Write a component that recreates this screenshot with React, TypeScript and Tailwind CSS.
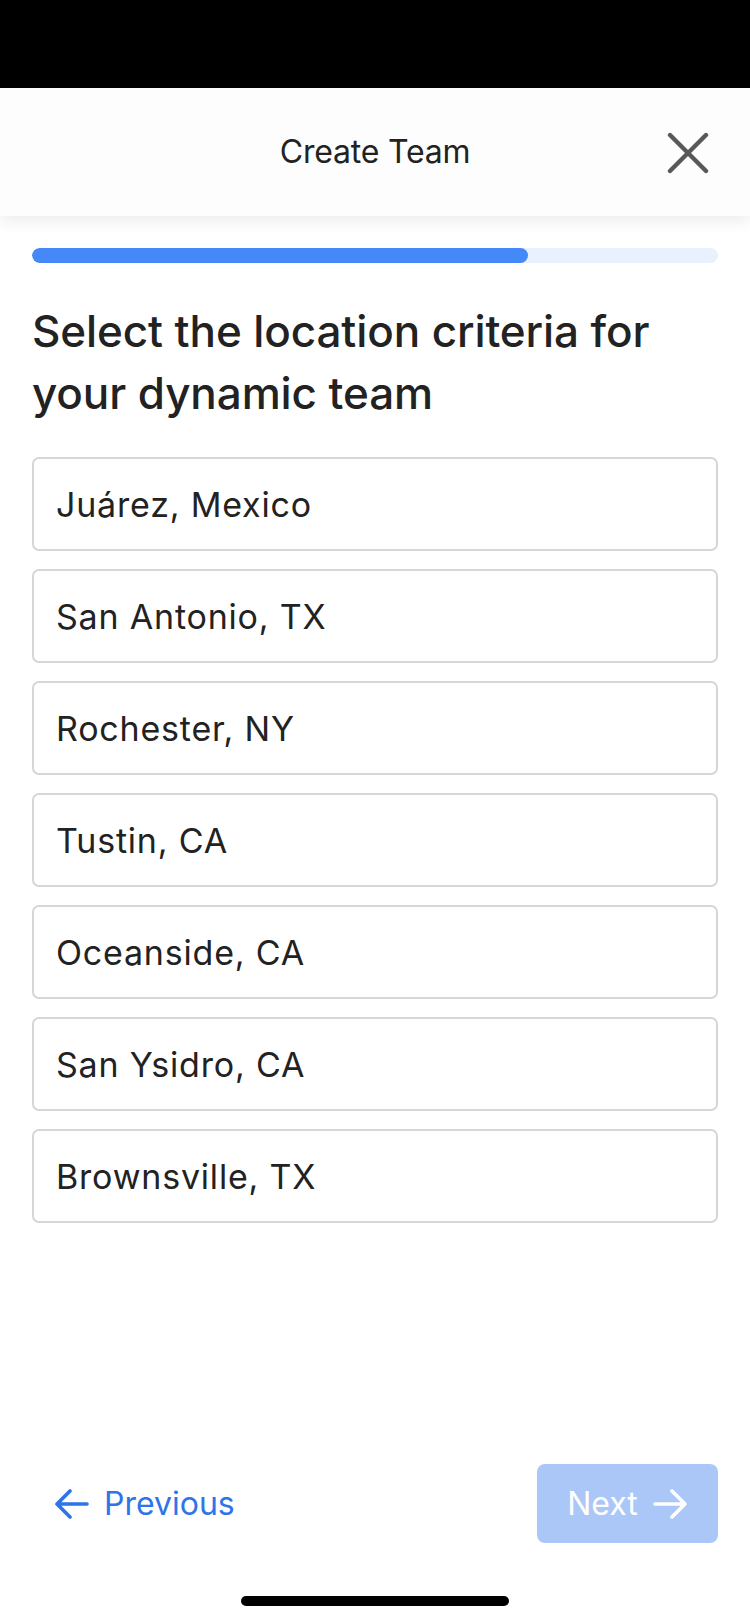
import { useState } from "react";

const locations = [
  "Juárez, Mexico",
  "San Antonio, TX",
  "Rochester, NY",
  "Tustin, CA",
  "Oceanside, CA",
  "San Ysidro, CA",
  "Brownsville, TX",
];

function ArrowIcon({ dir, className }: { dir: "left" | "right"; className?: string }) {
  const d = dir === "left" ? "M16 2 L3 15 L16 28 M3 15 H33" : "M20 2 L33 15 L20 28 M33 15 H3";
  return (
    <svg width="36" height="30" viewBox="0 0 36 30" fill="none" className={className}>
      <path d={d} stroke="currentColor" strokeWidth="3.6" strokeLinecap="round" strokeLinejoin="round" />
    </svg>
  );
}

export default function App() {
  const [selected, setSelected] = useState<string | null>(null);

  return (
    <div
      className="flex h-[1624px] w-[750px] flex-col overflow-hidden bg-white text-[#222222]"
      style={{ fontFamily: "Inter, 'Noto Sans', sans-serif" }}
    >
      <div className="h-[88px] shrink-0 bg-black" />

      <header className="relative z-10 flex h-[128px] shrink-0 items-center justify-center bg-[#fdfdfd] shadow-[0_6px_14px_rgba(0,0,0,0.07)]">
        <h1 className="text-[32px] font-normal tracking-[-0.2px] text-[#222222]">Create Team</h1>
        <button className="absolute right-[40px] top-[44px] text-[#58585a]" aria-label="Close">
          <svg width="44" height="42" viewBox="0 0 44 42" fill="none">
            <path d="M4 3 L40 39 M40 3 L4 39" stroke="currentColor" strokeWidth="4.4" strokeLinecap="round" />
          </svg>
        </button>
      </header>

      <main className="flex flex-1 flex-col px-[32px]">
        <div className="mt-[32px] h-[15px] w-full overflow-hidden rounded-full bg-[#eaf1fe]">
          <div className="h-full w-[72.3%] rounded-full bg-[#4589f8]" />
        </div>

        <h2 className="mt-[37px] text-[44px] font-medium leading-[62px] tracking-[-0.1px] text-[#222222]">
          Select the location criteria for your dynamic team
        </h2>

        <ul className="mt-[33px] flex flex-col gap-[18px]">
          {locations.map((loc) => (
            <li key={loc}>
              <button
                onClick={() => setSelected(loc)}
                className={
                  "flex h-[94px] w-full items-center rounded-[7px] border-2 px-[22px] text-left text-[34px] tracking-[0.8px] text-[#222222] " +
                  (selected === loc ? "border-[#4589f8]" : "border-[#d6d6d6]")
                }
              >
                {loc}
              </button>
            </li>
          ))}
        </ul>

        <div className="flex-1" />

        <div className="flex items-center justify-between">
          <button className="flex items-center gap-[14px] pl-[22px] text-[32px] text-[#2f74e8]">
            <ArrowIcon dir="left" />
            <span>Previous</span>
          </button>
          <button className="flex h-[79px] w-[181px] items-center justify-center gap-[14px] rounded-[8px] bg-[#abc7f7] text-[32px] text-white">
            <span>Next</span>
            <ArrowIcon dir="right" />
          </button>
        </div>
      </main>

      <div className="flex h-[81px] shrink-0 justify-center pt-[53px]">
        <div className="h-[10px] w-[268px] rounded-full bg-black" />
      </div>
    </div>
  );
}
